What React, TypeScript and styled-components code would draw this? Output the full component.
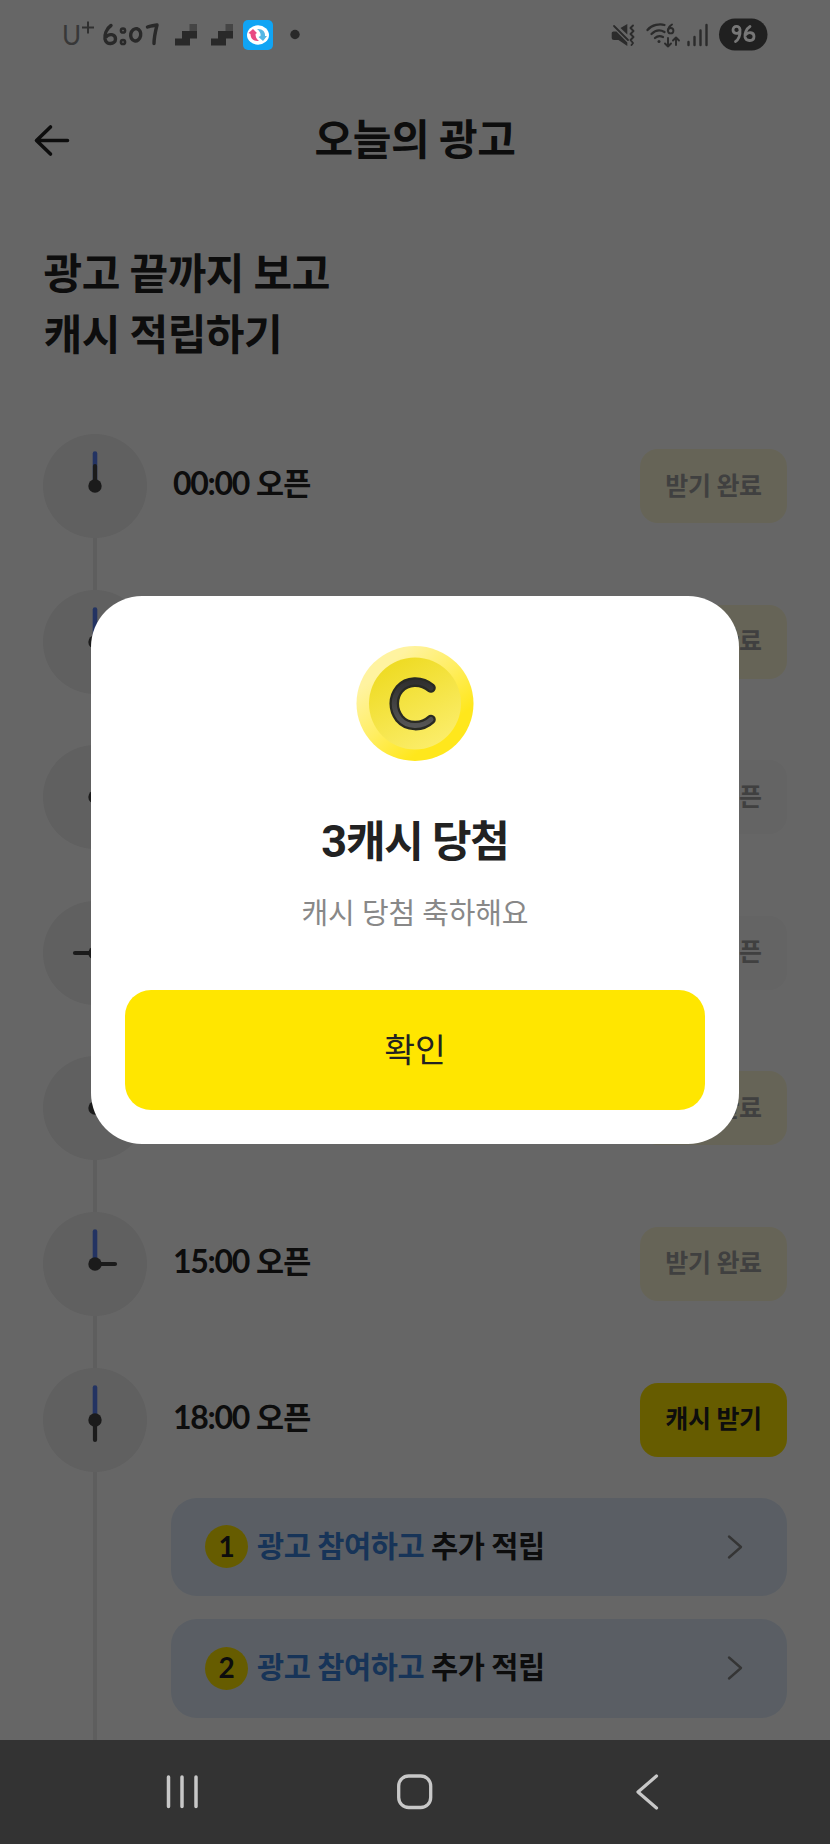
import React from 'react';
import styled, { createGlobalStyle } from 'styled-components';

const Global = createGlobalStyle`
  * { box-sizing: border-box; }
  body { margin: 0; background: #666; font-family: Lato, "Noto Sans CJK KR", sans-serif; }
  button { font: inherit; border: 0; padding: 0; }
  h1, h2, p { margin: 0; }
`;

const Phone = styled.div`
  position: relative;
  width: 830px;
  height: 1844px;
  display: flex;
  flex-direction: column;
  overflow: hidden;
  background: #fff;
  color: #222;
`;

const StatusBar = styled.div`
  position: relative;
  z-index: 3;
  flex: none;
  height: 70px;
  padding: 0 62px;
  display: flex;
  justify-content: space-between;
`;

const Page = styled.main`
  flex: 1;
  min-height: 0;
  overflow: hidden;
  display: flex;
  flex-direction: column;
`;

const Header = styled.header`
  flex: none;
  height: 140px;
  display: grid;
  grid-template-columns: 104px 1fr 104px;
  align-items: center;
`;

const BackButton = styled.button`
  background: none;
  display: flex;
  height: 140px;
`;

const Title = styled.h1`
  text-align: center;
  font-size: 42px;
  line-height: 60px;
  font-weight: 700;
  letter-spacing: -0.4px;
  padding-bottom: 3px;
`;

const Heading = styled.h2`
  flex: none;
  height: 224px;
  padding: 33px 43.5px 0;
  font-size: 42px;
  line-height: 61px;
  font-weight: 700;
  letter-spacing: -0.5px;
`;

const Timeline = styled.div`
  display: flex;
  flex-direction: column;
  padding: 0 43px;
`;

const Slot = styled.div<{ $last?: boolean }>`
  flex: none;
  height: ${(p) => (p.$last ? 104 : 155.6)}px;
  display: grid;
  grid-template-columns: 104px 1fr 147px;
  column-gap: 26px;
`;

const Rail = styled.div`
  display: flex;
  flex-direction: column;
  align-items: center;
`;

const RailLine = styled.div`
  flex: 1;
  width: 4px;
  background: #ebebeb;
`;

const SlotLabel = styled.div`
  height: 104px;
  display: flex;
  align-items: center;
  gap: 7px;
  padding-bottom: 6px;
  line-height: 44px;
  font-size: 30.5px;
  font-weight: 700;
  letter-spacing: -0.7px;
`;

const SlotTime = styled.span`
  font-size: 32px;
  letter-spacing: -1.3px;
`;

const ActionCell = styled.div`
  height: 104px;
  display: flex;
  align-items: center;
`;

type Kind = 'done' | 'missed' | 'ready';
const kinds = {
  done: ['#fffbd9', '#a0a0a0'],
  missed: ['#fafafa', '#a0a0a0'],
  ready: ['#ffe600', '#222'],
};

const ActionButton = styled.button<{ $kind: Kind }>`
  width: 147px;
  height: 74px;
  border-radius: 18px;
  padding-bottom: 5px;
  background: ${(p) => kinds[p.$kind][0]};
  color: ${(p) => kinds[p.$kind][1]};
  font-size: 25px;
  font-weight: 700;
  letter-spacing: -0.3px;
`;

const Extras = styled.div`
  display: grid;
  grid-template-columns: 104px 1fr;
  column-gap: 24px;
  height: 271px;
`;

const CardList = styled.div`
  display: flex;
  flex-direction: column;
  gap: 23px;
  padding-top: 26px;
`;

const BonusCard = styled.div`
  flex: none;
  height: 98.6px;
  border-radius: 26px;
  background: #e0ecfb;
  display: flex;
  align-items: center;
  padding: 0 39px 0 34px;
`;

const NumberBadge = styled.span`
  width: 43px;
  height: 43px;
  border-radius: 50%;
  background: #ffe600;
  display: flex;
  align-items: center;
  justify-content: center;
  font-size: 28px;
  font-weight: 700;
  padding-bottom: 2px;
`;

const BonusText = styled.span`
  flex: 1;
  padding: 0 0 6px 9px;
  font-size: 29.5px;
  font-weight: 700;
  letter-spacing: -0.4px;
  em { font-style: normal; color: #3b82dc; }
`;

const NavBar = styled.nav`
  position: relative;
  z-index: 3;
  flex: none;
  height: 104px;
  background: #333;
  display: flex;
  justify-content: space-between;
  align-items: center;
  padding: 0 170px 0 165px;
`;

const Overlay = styled.div`
  position: absolute;
  inset: 0;
  z-index: 2;
  background: rgba(0, 0, 0, 0.6);
  display: flex;
  align-items: flex-start;
  justify-content: center;
  padding-top: 596px;
`;

const Dialog = styled.section`
  width: 648px;
  height: 548px;
  border-radius: 51px;
  background: #fff;
  display: flex;
  flex-direction: column;
  align-items: center;
  padding: 49px 34px 34px;
`;

const DialogTitle = styled.h2`
  margin-top: 46px;
  font-size: 43px;
  line-height: 64px;
  font-weight: 700;
  letter-spacing: -1.2px;
  color: #222;
`;

const Amount = styled.span`
  font-family: Roboto, sans-serif;
  font-size: 45px;
  line-height: 1;
`;

const DialogText = styled.p`
  margin-top: 19px;
  font-size: 29px;
  line-height: 42px;
  letter-spacing: -0.15px;
  color: #888;
`;

const ConfirmButton = styled.button`
  width: 580px;
  height: 120.5px;
  margin-top: auto;
  border-radius: 26px;
  background: #ffe600;
  color: #222;
  font-size: 33.5px;
  padding-bottom: 5px;
`;

const Clock = ({ hour }: { hour: number }) => (
  <svg width="104" height="104" viewBox="0 0 104 104">
    <circle cx="52" cy="52" r="52" fill="#efefef" />
    <path d="M52 52V19.500" stroke="#5781f5" strokeWidth="4.600" strokeLinecap="round" />
    <path d="M52 52V32" stroke="#444" strokeWidth="4.200" strokeLinecap="round" transform={`rotate(${hour * 30} 52 52)`} />
    <circle cx="52" cy="52" r="6.700" fill="#444" />
  </svg>
);

const StatusLeft = () => (
  <svg width="250" height="70" viewBox="62 0 250 70">
    <text x="62" y="45" fontFamily="Lato" fontWeight="400" fontSize="26" fill="#383838">U</text>
    <path d="M88 21.500V33.500M82 27.500H94" stroke="#303030" strokeWidth="2" />
    <g fill="none" stroke="#292929" strokeWidth="3.400" strokeLinecap="round" strokeLinejoin="round">
      <path d="M111 25.500C106 29 104.500 35 105 39C106 45.500 115.500 44.500 115.500 39C115.500 34 109 33 105.500 37.500" />
      <circle cx="123" cy="30.500" r="2.100" strokeWidth="2.500" />
      <circle cx="123" cy="42" r="2.100" strokeWidth="2.500" />
      <ellipse cx="135.700" cy="34.800" rx="5" ry="6.200" transform="rotate(12 135.700 34.800)" />
      <path d="M147.500 27C150 26 154 25.500 157 25C155.500 31 154 37 154 43.500" />
    </g>
    {[175, 211].map((x) => (
      <g key={x} fill="#292929">
        <path d={`M${x} 38.500H${x + 7}V31H${x + 22}V38.500H${x + 15}V45.500H${x}Z`} />
        <rect x={x + 14.500} y="24" width="7.500" height="7" fill="#454545" />
      </g>
    ))}
    <rect x="243" y="20" width="30" height="30" rx="5" fill="#10a4f4" />
    <ellipse cx="258" cy="35" rx="11" ry="9.700" fill="#fff" />
    <path d="M248.500 33L253 29L257 33L255.500 34C255.500 37 256.500 39 259 41C253 41.500 250.500 38 250.500 34Z" fill="#e84a82" />
    <path d="M257 29C262.500 28.500 265.500 32 265 36H267L263 41L258.500 37L260.500 36C261 33 259.500 31 257 29Z" fill="#55b7e4" />
    <circle cx="295" cy="34.500" r="4.700" fill="#292929" />
  </svg>
);

const StatusRight = () => (
  <svg width="158" height="70" viewBox="610 0 158 70">
    <g fill="#2b2b2b">
      <path d="M611.700 33Q611.700 31.500 613.500 31.500H616.500L627.300 42.500V46L618.500 40H614Q611.700 40 611.700 38Z" />
      <path d="M627.300 24V34.500L620.500 28Z" />
    </g>
    <g fill="none" stroke="#2b2b2b" strokeLinecap="round" strokeLinejoin="round">
      <path d="M614 26L628 40" strokeWidth="1.800" />
      <path d="M633 25.500L630.500 28L633.500 31L630.500 34L633.500 37L630.500 40L633 43L631.500 45" strokeWidth="1.900" />
      <path d="M647.500 30C652 24.500 660 23.500 664.500 25" strokeWidth="2.300" />
      <path d="M651.500 34C655.500 30 660 29.500 664.500 32M655 38C657.500 35.800 660.500 35.800 663 37" strokeWidth="2.300" />
      <path d="M672 24.500C669.500 26 668.200 28 667.800 30.500" strokeWidth="1.900" />
      <circle cx="670.700" cy="30.700" r="2.700" strokeWidth="1.900" />
      <path d="M668 38V46.500M665 43.500L668 46.500L671 43.500M676 45V37.500M673 40.500L676 37.500L679 40.500" strokeWidth="1.900" />
      <path d="M688.500 42V45M694.500 37V45M700.500 30.500V45M706.500 25V45" strokeWidth="2.400" />
    </g>
    <circle cx="659" cy="41.500" r="1.500" fill="#2b2b2b" />
    <rect x="719" y="18.500" width="48.500" height="32" rx="16" fill="#202020" />
    <g fill="none" stroke="#777" strokeWidth="2.800" strokeLinecap="round">
      <path d="M740 31C739 34.500 733 34 733 30C733 25 740 25.500 740 30C740.500 35 738.500 40 735.500 41.500" />
      <path d="M750 26.500C746 29 744.500 34 745 37C746 42 754 41.500 754 36.500C754 32 748 31.500 745.500 35" />
    </g>
  </svg>
);

const CoinSvg = styled.svg`
  flex: none;
`;

const Coin = () => (
  <CoinSvg width="118" height="118" viewBox="0 0 118 118">
    <defs>
      <linearGradient id="rim" x1="0.100" y1="0.100" x2="0.800" y2="0.900">
        <stop offset="0.150" stopColor="#fff3a0" />
        <stop offset="0.500" stopColor="#ffee63" />
        <stop offset="0.850" stopColor="#ffe71c" />
      </linearGradient>
      <linearGradient id="face" x1="0.200" y1="0" x2="0.750" y2="1">
        <stop offset="0.100" stopColor="#efdc26" />
        <stop offset="0.950" stopColor="#fbed69" />
      </linearGradient>
      <linearGradient id="letter" x1="0" y1="0" x2="0" y2="1">
        <stop offset="0" stopColor="#303030" />
        <stop offset="1" stopColor="#555" />
      </linearGradient>
    </defs>
    <ellipse cx="59" cy="58.500" rx="58.500" ry="57.500" fill="url(#rim)" />
    <circle cx="59" cy="58.500" r="46" fill="url(#face)" />
    <path d="M75 43C65 34.500 51 35.500 43.500 44C36.500 52.500 36.500 64.500 43.500 73.500C51 82.500 66 83 75 74.500" fill="none" stroke="#292a23" strokeWidth="9.600" strokeLinecap="round" />
    <path d="M75 43C65 34.500 51 35.500 43.500 44C36.500 52.500 36.500 64.500 43.500 73.500C51 82.500 66 83 75 74.500" fill="none" stroke="url(#letter)" strokeWidth="5" strokeLinecap="round" />
  </CoinSvg>
);

const Chevron = () => (
  <svg width="26" height="30" viewBox="0 0 26 30">
    <path d="M7 4.500L19 15L7 25.500" fill="none" stroke="#858585" strokeWidth="2.400" strokeLinecap="round" strokeLinejoin="round" />
  </svg>
);

type SlotData = { time: string; hour: number; kind: Kind; label: string; last?: boolean };

const slots: SlotData[] = [
  { time: '00:00', hour: 0, kind: 'done', label: '받기 완료' },
  { time: '03:00', hour: 3, kind: 'done', label: '받기 완료' },
  { time: '06:00', hour: 3, kind: 'missed', label: '지난 오픈' },
  { time: '09:00', hour: 9, kind: 'missed', label: '지난 오픈' },
  { time: '12:00', hour: 0, kind: 'done', label: '받기 완료' },
  { time: '15:00', hour: 3, kind: 'done', label: '받기 완료' },
  { time: '18:00', hour: 6, kind: 'ready', label: '캐시 받기', last: true },
];

const SlotRow = ({ time, hour, kind, label, last }: SlotData) => (
  <Slot $last={last}>
    <Rail><Clock hour={hour} /><RailLine /></Rail>
    <SlotLabel><SlotTime>{time}</SlotTime>오픈</SlotLabel>
    <ActionCell><ActionButton $kind={kind}>{label}</ActionButton></ActionCell>
  </Slot>
);

export default function App() {
  return (
    <>
      <Global />
      <Phone>
        <StatusBar><StatusLeft /><StatusRight /></StatusBar>
        <Page>
          <Header>
            <BackButton aria-label="뒤로">
              <svg width="104" height="140" viewBox="0 70 104 140">
                <path d="M67.500 140.500H37M50.500 127L36.500 140.500L50.500 154" fill="none" stroke="#222" strokeWidth="3.600" strokeLinecap="round" strokeLinejoin="round" />
              </svg>
            </BackButton>
            <Title>오늘의 광고</Title>
          </Header>
          <Heading>광고 끝까지 보고<br />캐시 적립하기</Heading>
          <Timeline>
            {slots.map((s) => <SlotRow key={s.time} {...s} />)}
            <Extras>
              <Rail><RailLine /></Rail>
              <CardList>
                {[1, 2].map((n) => (
                  <BonusCard key={n}>
                    <NumberBadge>{n}</NumberBadge>
                    <BonusText><em>광고 참여하고</em> 추가 적립</BonusText>
                    <Chevron />
                  </BonusCard>
                ))}
              </CardList>
            </Extras>
          </Timeline>
        </Page>
        <NavBar>
          <svg width="36" height="40" viewBox="0 0 36 40">
            <path d="M3.500 5V34.500M17 5V34.500M31 5V34.500" stroke="#c8c8c8" strokeWidth="3.500" strokeLinecap="round" />
          </svg>
          <svg width="38" height="40" viewBox="0 0 38 40">
            <rect x="1.700" y="4" width="32" height="31.500" rx="10" fill="none" stroke="#c8c8c8" strokeWidth="3.300" />
          </svg>
          <svg width="30" height="40" viewBox="0 0 30 40">
            <path d="M26.500 4L8 20L26.500 36" fill="none" stroke="#c8c8c8" strokeWidth="3.200" strokeLinecap="round" strokeLinejoin="round" />
          </svg>
        </NavBar>
        <Overlay>
          <Dialog role="dialog">
            <Coin />
            <DialogTitle><Amount>3</Amount>캐시 당첨</DialogTitle>
            <DialogText>캐시 당첨 축하해요</DialogText>
            <ConfirmButton>확인</ConfirmButton>
          </Dialog>
        </Overlay>
      </Phone>
    </>
  );
}
